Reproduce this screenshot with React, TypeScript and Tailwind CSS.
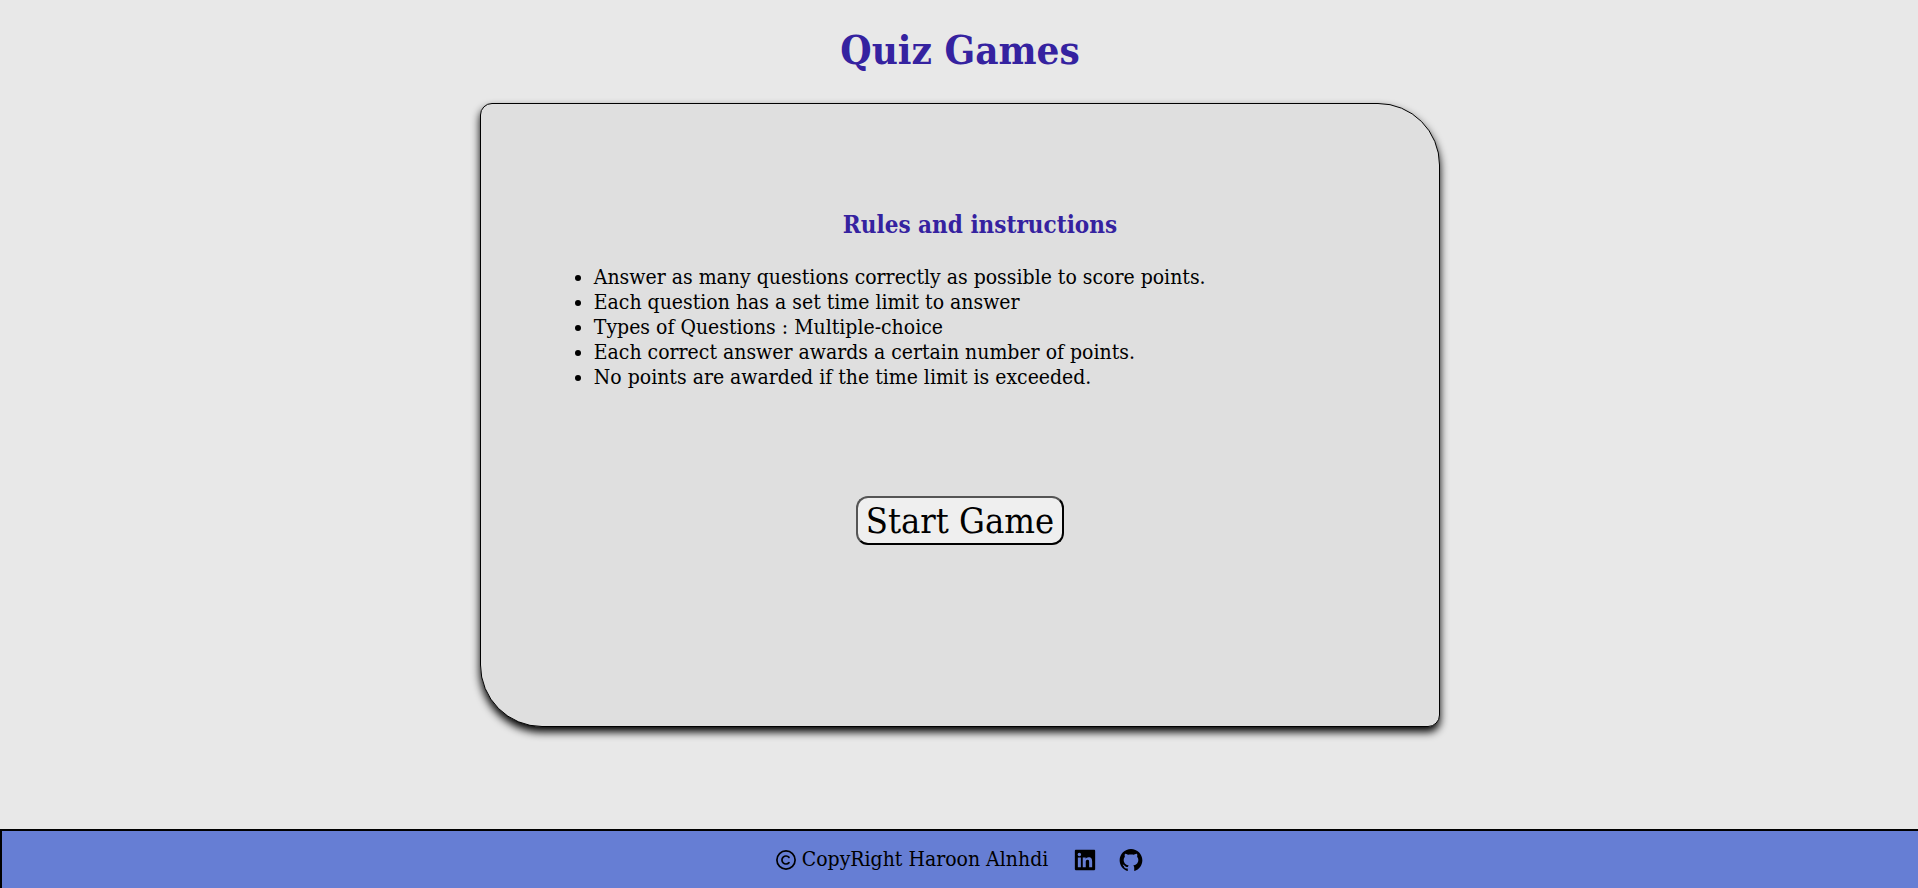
import { AiFillGithub, AiFillLinkedin } from "react-icons/ai";

const rules = [
  "Answer as many questions correctly as possible to score points.",
  "Each question has a set time limit to answer",
  "Types of Questions : Multiple-choice",
  "Each correct answer awards a certain number of points.",
  "No points are awarded if the time limit is exceeded.",
];

function CopyrightIcon() {
  return (
    <svg viewBox="0 0 20 20" className="mr-1.5 size-5" fill="none" stroke="currentColor" strokeWidth="1.7" aria-hidden="true">
      <circle cx="10" cy="10" r="9.1" />
      <path d="M13 7.4a4 4 0 1 0 0 5.2" strokeLinecap="round" />
    </svg>
  );
}

export default function App() {
  return (
    <div className="flex min-h-screen flex-col bg-[#e8e8e8] font-['DejaVu_Serif_Condensed','DejaVu_Serif',serif] text-black">
      <header className="pt-6 pl-0.5 text-center">
        <h1 className="text-[40px] leading-[52px] font-bold text-[#3522a0]">Quiz Games</h1>
      </header>
      <main className="flex flex-1 flex-col items-center pt-[27px] pb-[102px] pl-0.5">
        <section className="box-content flex w-1/2 flex-1 flex-col items-center rounded-tl-xl rounded-tr-[62px] rounded-br-xl rounded-bl-[62px] border border-black bg-[#dfdfdf] shadow-[0_5px_8px_#000]">
          <div className="mt-[105px] w-4/5 pl-10">
            <h2 className="text-center text-[24px] leading-8 font-bold text-[#3522a0]">Rules and instructions</h2>
          </div>
          <ul className="mt-6 w-4/5 list-disc pl-[17px] text-[21px] leading-[25px]">
            {rules.map((rule) => (
              <li key={rule}>{rule}</li>
            ))}
          </ul>
          <button type="button" className="mt-[106px] rounded-xl border-2 border-[#555] border-r-black border-b-black bg-[#efefef] px-2 text-[36px] leading-[45px]">
            Start Game
          </button>
        </section>
      </main>
      <footer className="flex h-[59px] items-center justify-center border-t-2 border-l-2 border-black bg-[#667ed4] text-[21px]">
        <CopyrightIcon />
        <span>CopyRight Haroon Alnhdi</span>
        <a href="#linkedin" aria-label="LinkedIn" className="ml-6">
          <AiFillLinkedin className="size-[26px]" />
        </a>
        <a href="#github" aria-label="GitHub" className="ml-5">
          <AiFillGithub className="size-[26px]" />
        </a>
      </footer>
    </div>
  );
}
